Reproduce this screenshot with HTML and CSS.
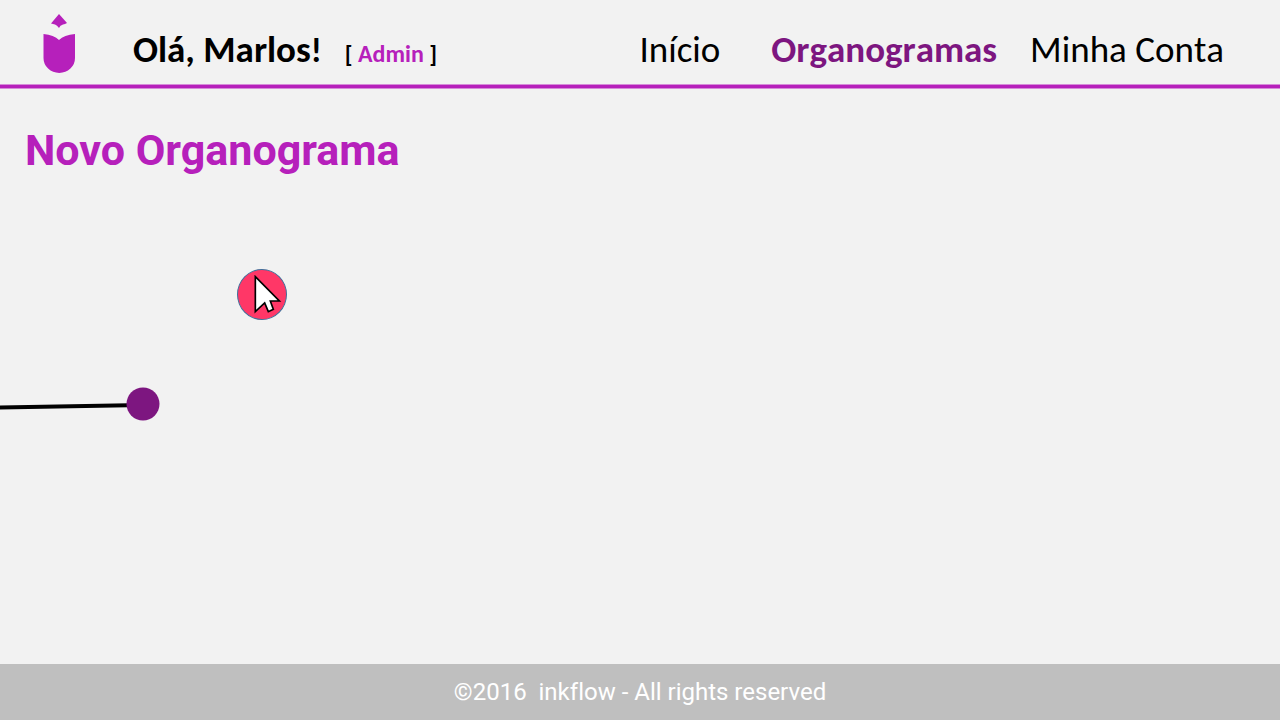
FILE: index.html
```html
<!DOCTYPE html>
<html lang="pt-BR">
<head>
<meta charset="utf-8">
<meta name="viewport" content="width=device-width, initial-scale=1">
<title>inkflow</title>
<link rel="stylesheet" href="styles.css">
</head>
<body>
<header class="topbar">
  <svg class="logo" viewBox="0 0 32 60" role="img" aria-label="inkflow">
    <path d="M16 0 L24 9 Q22 10 20 10.500 Q17 11 16 14 Q14 11 12 10.500 Q10 10 8 9.500Z"/>
    <path d="M.5 20 Q11 21 16 26 Q21 21 32 20 V44 A15.750 15 0 0 1 .5 44Z"/>
  </svg>
  <p class="greeting">Olá, Marlos<span class="mark">!</span></p>
  <p class="role">[ <span class="role-name">Admin</span> ]</p>
  <nav class="nav">
    <a class="nav-link" href="#">Início</a>
    <a class="nav-link nav-link-active" href="#" aria-current="page">Organogramas</a>
    <a class="nav-link" href="#">Minha Conta</a>
  </nav>
</header>
<main class="content">
  <h1 class="title">Novo Organograma</h1>
  <section class="canvas" aria-label="Organograma">
    <svg class="branch" viewBox="0 0 160 40" aria-hidden="true">
      <path class="branch-line" d="M-4 23.500 L143 21"/>
      <circle class="branch-node" cx="143" cy="20" r="16.500"/>
    </svg>
    <button class="node" type="button" aria-label="Adicionar"></button>
    <svg class="pointer" viewBox="0 0 84 120" aria-hidden="true">
      <path d="M4 5 L76 78 H49 L58 103 L43 110 L32 84 L4 110Z"/>
    </svg>
  </section>
</main>
<footer class="footer">©2016&nbsp; inkflow - All rights reserved</footer>
</body>
</html>
```
FILE: styles.css
```css
* { box-sizing: border-box; }
body {
  margin: 0;
  min-height: 100vh;
  display: flex;
  flex-direction: column;
  background: #f2f2f2;
  color: #000;
  font-family: Carlito, Calibri, Lato, sans-serif;
}
p, h1 { margin: 0; }
.topbar {
  display: flex;
  align-items: baseline;
  padding: 14px 56px 0 43px;
  border-bottom: 3px solid #b620bb;
  box-shadow: inset 0 -1px #d68bd9, 0 1px #d68bd9;
  font-kerning: none;
}
.logo {
  align-self: flex-start;
  width: 32px;
  height: 60px;
  margin-right: 58px;
  fill: #b620bb;
}
.greeting {
  font-size: 37px;
  line-height: 71px;
  font-weight: 700;
}
.mark {
  font-size: 34px;
  line-height: 1;
}
.role {
  margin-left: 23px;
  font-size: 24px;
  font-weight: 700;
}
.role-name { color: #b620bb; }
.nav {
  display: flex;
  align-items: baseline;
  gap: 33px;
  margin-left: auto;
}
.nav-link {
  color: #000;
  font-size: 37px;
  text-decoration: none;
}
.nav-link:first-child { margin-right: 18px; }
.nav-link-active { color: #7d1680; font-weight: 700; }
.content {
  flex: 1;
  display: flex;
  flex-direction: column;
  padding-top: 37px;
}
.title {
  padding-left: 25px;
  color: #b620bb;
  font: 700 43px/50px Roboto, sans-serif;
}
.canvas { position: relative; flex: 1; }
.branch {
  position: absolute;
  left: 0;
  top: 209px;
  width: 160px;
  height: 40px;
}
.branch-line { stroke: #000; stroke-width: 4; }
.branch-node { fill: #7d1680; }
.node {
  position: absolute;
  left: 237px;
  top: 94px;
  width: 50px;
  height: 51px;
  padding: 0;
  border: 1px solid #41719c;
  border-radius: 50%;
  background: #ff3767;
}
.pointer {
  position: absolute;
  left: 254px;
  top: 100px;
  width: 28px;
  height: 40px;
  pointer-events: none;
}
.pointer path { fill: #fff; stroke: #000; stroke-width: 5; }
.footer {
  padding: 13px 16px;
  background: #bfbfbf;
  color: #fff;
  font: 24px/30px Roboto, sans-serif;
  font-variant-ligatures: none;
  text-align: center;
}
```
